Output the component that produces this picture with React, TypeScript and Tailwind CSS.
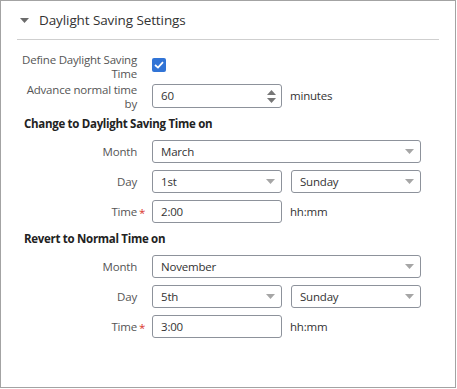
import React from 'react';

const Caret = ({ className = '' }: { className?: string }) => (
  <svg width="9" height="5" viewBox="0 0 9 5" className={className}>
    <path d="M0 0 H9 L4.5 5 Z" fill="currentColor" />
  </svg>
);

const Select = ({ value, w }: { value: string; w: string }) => (
  <div className={`${w} h-[23px] border border-[#8d929b] rounded-[3px] flex items-center justify-between pl-2 pr-[6px] text-[#333]`}>
    <span>{value}</span>
    <Caret className="text-[#a6a6a6]" />
  </div>
);

const TextBox = ({ value }: { value: string }) => (
  <div className="w-[130px] h-[23px] border border-[#8d929b] rounded-[3px] flex items-center pl-2 text-[#333]">
    {value}
  </div>
);

const Label = ({ children, required }: { children: React.ReactNode; required?: boolean }) => (
  <div className="w-[120px] text-right text-[#555] leading-[14px]">
    <span className="relative">
      {children}
      {required && <span className="absolute left-full ml-[2px] top-[2px] text-[#d9342b]">*</span>}
    </span>
  </div>
);

const Section = ({ title, month, day, time }: { title: string; month: string; day: string; time: string }) => (
  <>
    <div className="ml-[7px] font-bold text-[#222] leading-[16px] text-[11.5px] tracking-[-0.3px]">{title}</div>
    <div className="flex items-center gap-[15px] mt-[8px]">
      <Label>Month</Label>
      <Select value={month} w="w-[269px]" />
    </div>
    <div className="flex items-center gap-[15px] mt-[7px]">
      <Label>Day</Label>
      <div className="flex gap-[9px]">
        <Select value={day} w="w-[130px]" />
        <Select value="Sunday" w="w-[130px]" />
      </div>
    </div>
    <div className="flex items-center gap-[15px] mt-[7px]">
      <Label required>Time</Label>
      <div className="flex items-center gap-[8px]">
        <TextBox value={time} />
        <span className="text-[#333]">hh:mm</span>
      </div>
    </div>
  </>
);

export default function App() {
  return (
    <div className="w-[457px] h-[389px] bg-white" style={{ fontFamily: '"Open Sans", sans-serif' }}>
      <div className="w-[456px] h-[388px] border border-[#a3a3a3] text-[11.5px] tracking-[-0.2px]">
        <div className="flex items-center h-[38px] pl-[19px]">
          <Caret className="text-[#6b6b6b] mt-[1px]" />
          <span className="ml-[10px] text-[13.5px] tracking-[-0.1px] text-[#333]">Daylight Saving Settings</span>
        </div>
        <div className="mx-[16px] border-t border-[#cfcfcf]" />
        <div className="pl-[16px] pt-[13px]">
          <div className="flex items-start gap-[15px]">
            <Label>Define Daylight Saving Time</Label>
            <div className="mt-[5px] w-[14px] h-[14px] rounded-[2px] bg-[#3174d6] flex items-center justify-center">
              <svg width="10" height="8" viewBox="0 0 10 8">
                <path d="M1 4 L4 6.6 L9 1.2" stroke="white" strokeWidth="1.8" fill="none" />
              </svg>
            </div>
          </div>
          <div className="flex items-start gap-[15px] mt-[2px]">
            <Label>Advance normal time by</Label>
            <div className="flex items-center gap-[8px] mt-[1px]">
              <div className="w-[130px] h-[24px] border border-[#8d929b] rounded-[3px] flex items-center justify-between pl-2 pr-[5px] text-[#333]">
                <span>60</span>
                <div className="flex flex-col gap-[3px] text-[#777]">
                  <svg width="9" height="5" viewBox="0 0 9 5"><path d="M0 5 H9 L4.5 0 Z" fill="currentColor" /></svg>
                  <svg width="9" height="5" viewBox="0 0 9 5"><path d="M0 0 H9 L4.5 5 Z" fill="currentColor" /></svg>
                </div>
              </div>
              <span className="text-[#333]">minutes</span>
            </div>
          </div>
          <div className="mt-[5px]">
            <Section title="Change to Daylight Saving Time on" month="March" day="1st" time="2:00" />
          </div>
          <div className="mt-[8px]">
            <Section title="Revert to Normal Time on" month="November" day="5th" time="3:00" />
          </div>
        </div>
      </div>
    </div>
  );
}
